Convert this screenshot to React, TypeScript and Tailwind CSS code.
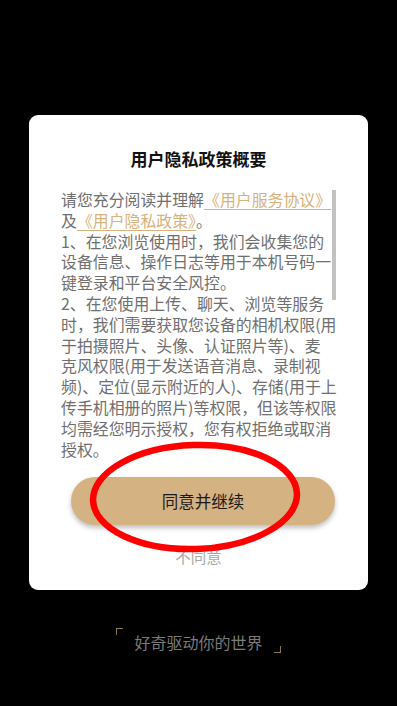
import React from "react";

const lines1 = [
  "1、在您浏览使用时，我们会收集您的",
  "设备信息、操作日志等用于本机号码一",
  "键登录和平台安全风控。",
];
const lines2 = [
  "2、在您使用上传、聊天、浏览等服务",
  "时，我们需要获取您设备的相机权限(用",
  "于拍摄照片、头像、认证照片等)、麦",
  "克风权限(用于发送语音消息、录制视",
  "频)、定位(显示附近的人)、存储(用于上",
  "传手机相册的照片)等权限，但该等权限",
  "均需经您明示授权，您有权拒绝或取消",
  "授权。",
];

export default function App() {
  const font = { fontFamily: '"Noto Sans CJK SC", "Noto Sans", sans-serif' };
  const link = "text-[#d8b27c] underline decoration-[#d8b27c] underline-offset-[3px] decoration-1";
  return (
    <div className="relative w-[397px] h-[706px] bg-black flex flex-col items-center overflow-hidden" style={font}>
      <div className="mt-[115px] w-[339px] h-[475px] bg-white rounded-[9px] flex flex-col">
        <div className="pt-[32px] text-center text-[17px] leading-[24px] font-bold text-[#111]">用户隐私政策概要</div>
        <div className="relative mt-[19px] h-[270px]">
          <div className="pl-[32px] text-[15.9px] leading-[20.8px] text-[#6f6f6f] whitespace-nowrap">
            <div>
              请您充分阅读并理解<span className={link}>《用户服务协议》</span>
            </div>
            <div>
              及<span className={link}>《用户隐私政策》</span>。
            </div>
            {lines1.map((l) => (
              <div key={l}>{l}</div>
            ))}
            {lines2.map((l) => (
              <div key={l}>{l}</div>
            ))}
          </div>
          <div className="absolute left-[303px] top-0 w-[4px] h-[110px] bg-[#c2c2c2]" />
        </div>
        <button className="mt-[17px] ml-[42px] w-[264px] h-[48px] rounded-full bg-[#d5b281] text-[16.5px] text-[#1a1a1a] shadow-[0_3px_5px_rgba(0,0,0,0.25)]">
          同意并继续
        </button>
        <div className="mt-[20px] text-center text-[15.5px] leading-[22px] text-[#a8a8a8]">不同意</div>
      </div>
      <div className="relative mt-[41px] px-[18px]">
        <div className="text-[16px] leading-[22px] text-[#7a7a7a]">好奇驱动你的世界</div>
        <div className="absolute left-0 -top-[3px] w-[7px] h-[7px] border-l border-t border-[#8a7650]" />
        <div className="absolute right-0 bottom-0 w-[7px] h-[7px] border-r border-b border-[#8a7650]" />
      </div>
      <svg className="absolute left-0 top-0 pointer-events-none" width="397" height="706">
        <ellipse cx="195" cy="497" rx="102" ry="52" fill="none" stroke="#ff0000" strokeWidth="6.5" transform="rotate(-2 195 497)" />
      </svg>
    </div>
  );
}
